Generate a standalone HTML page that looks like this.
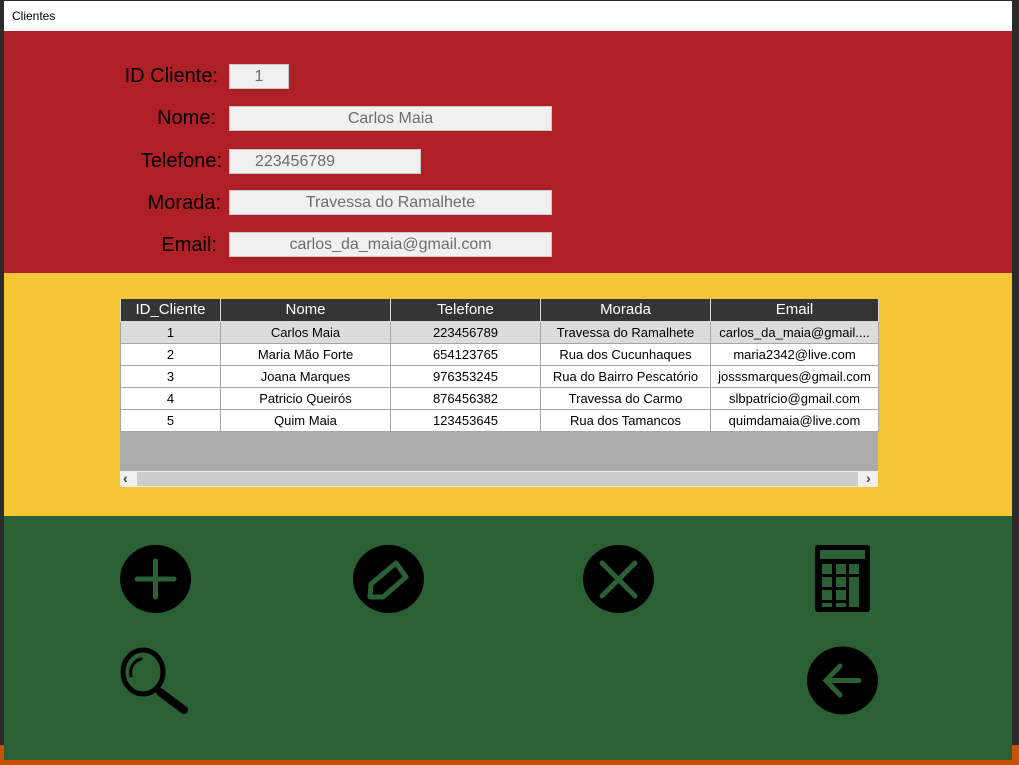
<!DOCTYPE html>
<html><head><meta charset="utf-8"><style>
*{margin:0;padding:0;box-sizing:border-box}
body{width:1019px;height:765px;background:#2b2b2b;position:relative;overflow:hidden;font-family:"Liberation Sans",sans-serif}
.a{position:absolute}
.lbl{position:absolute;font-size:20px;color:#000;text-align:right;width:200px}
.in{position:absolute;background:#f0f0f0;border:1px solid #c8c8c8;color:#6d6d6d;font-size:16px;text-align:center;height:25px;line-height:23px}
table{position:absolute;left:120px;top:299px;border-collapse:collapse;font-size:13px;table-layout:fixed}
th{background:#353535;color:#fff;font-weight:normal;font-size:15px;height:22px;border:1px solid #d8d8d8;border-top:none;padding:0}
td{height:22px;border:1px solid #a6a6a6;text-align:center;background:#fff;color:#000;padding:0;white-space:nowrap;overflow:hidden}
tr.s td{background:#dcdcdc}
</style></head><body>
<div class="a" style="left:0;top:745px;width:1019px;height:20px;background:#c85000"></div>
<div class="a" style="left:4px;top:1px;width:1008px;height:30px;background:#fff;font-size:12px;padding:8px 0 0 8px;color:#000">Clientes</div>
<div class="a" style="left:4px;top:31px;width:1008px;height:242px;background:#ae2026"></div>
<div class="a" style="left:4px;top:273px;width:1008px;height:243px;background:#f4c635"></div>
<div class="a" style="left:4px;top:516px;width:1008px;height:244px;background:#2a6033"></div>

<div class="lbl" style="left:18px;top:65px">ID Cliente:</div>
<div class="in" style="left:229px;top:64px;width:60px">1</div>
<div class="lbl" style="left:16px;top:107px">Nome:</div>
<div class="in" style="left:229px;top:106px;width:323px">Carlos Maia</div>
<div class="lbl" style="left:22px;top:150px">Telefone:</div>
<div class="in" style="left:229px;top:149px;width:192px;padding-right:60px">223456789</div>
<div class="lbl" style="left:21px;top:192px">Morada:</div>
<div class="in" style="left:229px;top:190px;width:323px">Travessa do Ramalhete</div>
<div class="lbl" style="left:17px;top:234px">Email:</div>
<div class="in" style="left:229px;top:232px;width:323px">carlos_da_maia@gmail.com</div>

<div class="a" style="left:120px;top:299px;width:758px;height:188px;background:#ababab"></div>
<table>
<colgroup><col style="width:100px"><col style="width:170px"><col style="width:150px"><col style="width:170px"><col style="width:168px"></colgroup>
<tr><th>ID_Cliente</th><th>Nome</th><th>Telefone</th><th>Morada</th><th>Email</th></tr>
<tr class="s"><td>1</td><td>Carlos Maia</td><td>223456789</td><td>Travessa do Ramalhete</td><td>carlos_da_maia@gmail....</td></tr>
<tr><td>2</td><td>Maria Mão Forte</td><td>654123765</td><td>Rua dos Cucunhaques</td><td>maria2342@live.com</td></tr>
<tr><td>3</td><td>Joana Marques</td><td>976353245</td><td>Rua do Bairro Pescatório</td><td>josssmarques@gmail.com</td></tr>
<tr><td>4</td><td>Patricio Queirós</td><td>876456382</td><td>Travessa do Carmo</td><td>slbpatricio@gmail.com</td></tr>
<tr><td>5</td><td>Quim Maia</td><td>123453645</td><td>Rua dos Tamancos</td><td>quimdamaia@live.com</td></tr>
</table>
<div class="a" style="left:120px;top:471px;width:758px;height:16px;background:#f0f0f0"></div>
<div class="a" style="left:137px;top:472px;width:721px;height:14px;background:#cdcdcd"></div>
<div class="a" style="left:123px;top:470px;font-size:14px;font-weight:bold;color:#444">&lsaquo;</div>
<div class="a" style="left:866px;top:470px;font-size:14px;font-weight:bold;color:#444">&rsaquo;</div>

<svg class="a" style="left:0;top:0" width="1019" height="765">
<g fill="#000">
<ellipse cx="155.5" cy="579" rx="35.5" ry="34"/>
<ellipse cx="388.5" cy="579" rx="35.5" ry="34"/>
<ellipse cx="618.5" cy="579" rx="35.5" ry="34"/>
<ellipse cx="842.5" cy="680.5" rx="35.5" ry="34"/>
<rect x="815" y="545" width="55" height="67" rx="3"/>
</g>
<g stroke="#2a6033" stroke-width="5" fill="none" stroke-linecap="round">
<path d="M137 579H174M155.5 561V597"/>
<path d="M602 563L635 596M635 563L602 596"/>
<path d="M826 680.5H859M840 666L826 680.5L840 695"/>
<path d="M370 597L371 584L396 563L406 577L383 597Z" stroke-linejoin="round" stroke-linecap="butt"/>
</g>
<g fill="#2a6033">
<rect x="820" y="550" width="45" height="9"/>
<rect x="822" y="564" width="10" height="10"/><rect x="836" y="564" width="10" height="10"/><rect x="849" y="564" width="10" height="10"/>
<rect x="822" y="577" width="10" height="10"/><rect x="836" y="577" width="10" height="10"/><rect x="849" y="577" width="10" height="30"/>
<rect x="822" y="590" width="10" height="10"/><rect x="836" y="590" width="10" height="10"/>
<rect x="822" y="603" width="10" height="4"/><rect x="836" y="603" width="10" height="4"/>
</g>
<ellipse cx="143" cy="672" rx="20" ry="22" stroke="#000" stroke-width="5" fill="none"/>
<path d="M131 676A13 14 0 0 1 141 659" stroke="#000" stroke-width="3" fill="none" stroke-linecap="round"/>
<path d="M160 692L184 710" stroke="#000" stroke-width="8" stroke-linecap="round"/>
</svg>
</body></html>
